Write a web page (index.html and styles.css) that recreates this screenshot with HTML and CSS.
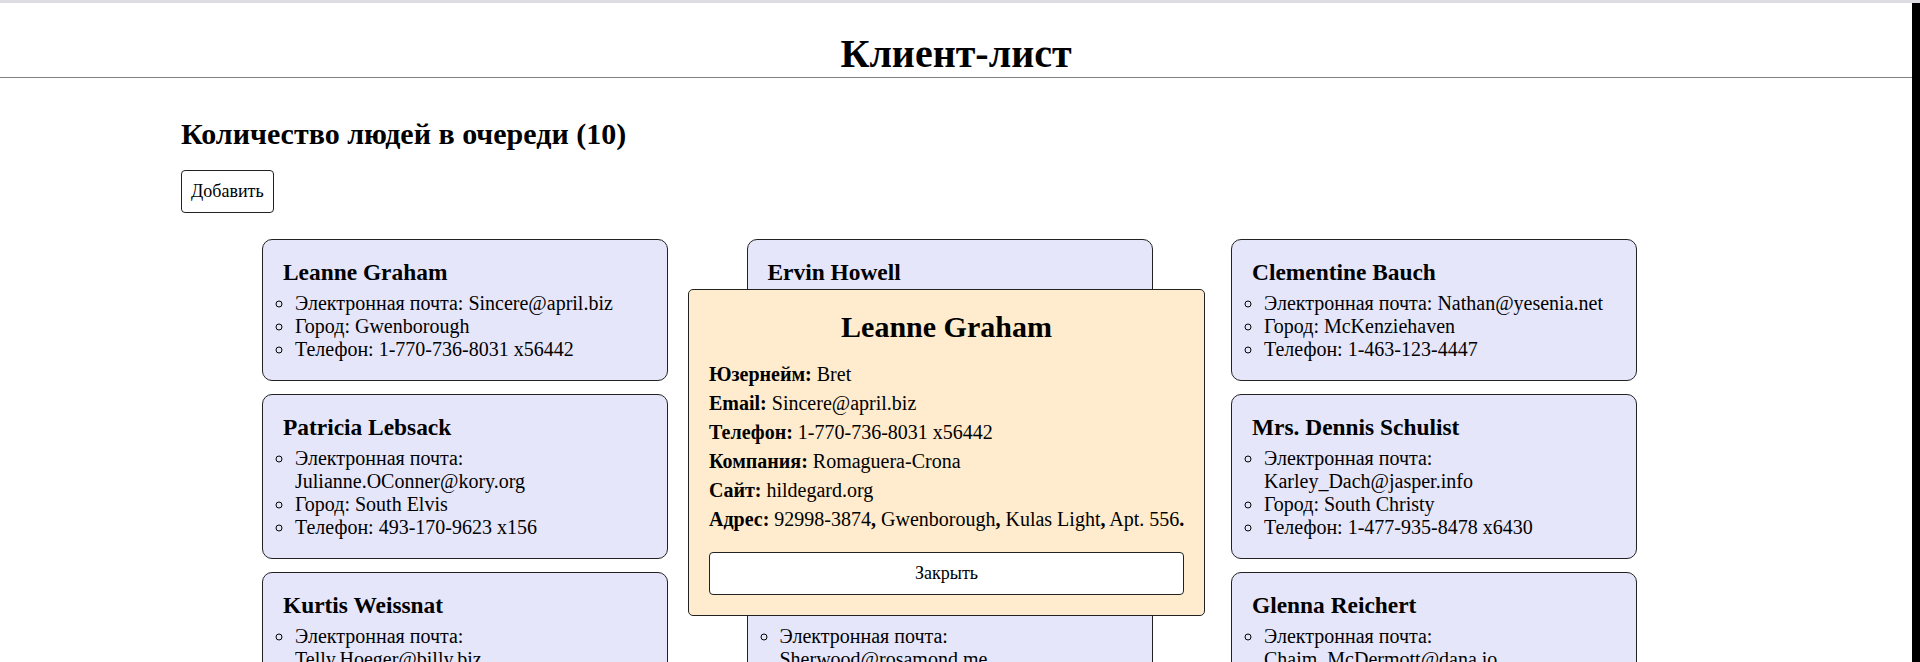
FILE: index.html
```html
<!DOCTYPE html>
<html lang="ru">
<head>
<meta charset="utf-8">
<title>Клиент-лист</title>
<link rel="stylesheet" href="styles.css">
</head>
<body>
<header class="page-header">
  <h1 class="page-title">Клиент-лист</h1>
</header>
<main class="queue">
  <h2 class="queue-title">Количество людей в очереди (10)</h2>
  <button class="btn btn-add" type="button">Добавить</button>
  <div class="client-grid">
    <div class="client-card">
      <h3 class="client-name">Leanne Graham</h3>
      <ul class="client-info">
        <li>Электронная почта: Sincere@april.biz</li>
        <li>Город: Gwenborough</li>
        <li>Телефон: 1-770-736-8031 x56442</li>
      </ul>
    </div>
    <div class="client-card">
      <h3 class="client-name">Ervin Howell</h3>
      <ul class="client-info">
        <li>Электронная почта: Shanna@melissa.tv</li>
        <li>Город: Wisokyburgh</li>
        <li>Телефон: 010-692-6593 x09125</li>
      </ul>
    </div>
    <div class="client-card">
      <h3 class="client-name">Clementine Bauch</h3>
      <ul class="client-info">
        <li>Электронная почта: Nathan@yesenia.net</li>
        <li>Город: McKenziehaven</li>
        <li>Телефон: 1-463-123-4447</li>
      </ul>
    </div>
    <div class="client-card">
      <h3 class="client-name">Patricia Lebsack</h3>
      <ul class="client-info">
        <li>Электронная почта: Julianne.OConner@kory.org</li>
        <li>Город: South Elvis</li>
        <li>Телефон: 493-170-9623 x156</li>
      </ul>
    </div>
    <div class="client-card">
      <h3 class="client-name">Chelsey Dietrich</h3>
      <ul class="client-info">
        <li>Электронная почта: Lucio_Hettinger@annie.ca</li>
        <li>Город: Roscoeview</li>
        <li>Телефон: (254)954-1289</li>
      </ul>
    </div>
    <div class="client-card">
      <h3 class="client-name">Mrs. Dennis Schulist</h3>
      <ul class="client-info">
        <li>Электронная почта: Karley_Dach@jasper.info</li>
        <li>Город: South Christy</li>
        <li>Телефон: 1-477-935-8478 x6430</li>
      </ul>
    </div>
    <div class="client-card">
      <h3 class="client-name">Kurtis Weissnat</h3>
      <ul class="client-info">
        <li>Электронная почта: Telly.Hoeger@billy.biz</li>
        <li>Город: Howemouth</li>
        <li>Телефон: 210.067.6132</li>
      </ul>
    </div>
    <div class="client-card">
      <h3 class="client-name">Nicholas Runolfsdottir V</h3>
      <ul class="client-info">
        <li>Электронная почта: Sherwood@rosamond.me</li>
        <li>Город: Aliyaview</li>
        <li>Телефон: 586.493.6943 x140</li>
      </ul>
    </div>
    <div class="client-card">
      <h3 class="client-name">Glenna Reichert</h3>
      <ul class="client-info">
        <li>Электронная почта: Chaim_McDermott@dana.io</li>
        <li>Город: Bartholomebury</li>
        <li>Телефон: (775)976-6794 x41206</li>
      </ul>
    </div>
    <div class="client-card">
      <h3 class="client-name">Clementina DuBuque</h3>
      <ul class="client-info">
        <li>Электронная почта: Rey.Padberg@karina.biz</li>
        <li>Город: Lebsackbury</li>
        <li>Телефон: 024-648-3804</li>
      </ul>
    </div>

    <div class="client-modal">
      <h2 class="modal-title">Leanne Graham</h2>
      <p class="modal-row"><b>Юзернейм:</b> Bret</p>
      <p class="modal-row"><b>Email:</b> Sincere@april.biz</p>
      <p class="modal-row"><b>Телефон:</b> 1-770-736-8031 x56442</p>
      <p class="modal-row"><b>Компания:</b> Romaguera-Crona</p>
      <p class="modal-row"><b>Сайт:</b> hildegard.org</p>
      <p class="modal-row modal-row-address"><b>Адрес:</b> 92998-3874<b>,</b> Gwenborough<b>,</b> Kulas Light<b>,</b> Apt. 556<b>.</b></p>
      <button class="btn btn-close" type="button">Закрыть</button>
    </div>
  </div>
</main>
</body>
</html>
```

FILE: styles.css
```css
html {
  border-top: 3px solid #dedde3;
  background: #ffffff;
  overflow: hidden;
}

body {
  margin: 0;
  border-right: 8px solid #000000;
  min-height: 659px;
  font-family: "Liberation Serif", "Times New Roman", serif;
  font-size: 20px;
  color: #000000;
}

.page-header {
  border-bottom: 1px solid #808080;
}

.page-title {
  margin: 28px 0 0;
  font-size: 40px;
  line-height: 46px;
  font-weight: bold;
  text-align: center;
}

.queue {
  padding: 39px 181px 20px;
}

.queue-title {
  margin: 0 0 20px;
  font-size: 30px;
  line-height: 33px;
  font-weight: bold;
}

.btn {
  font-family: "Liberation Serif", "Times New Roman", serif;
  font-size: 18px;
  line-height: 21px;
  color: #000000;
  background: #ffffff;
  border: 1px solid #222222;
  border-radius: 4px;
}

.btn-add {
  display: block;
  padding: 10px 9px;
}

.client-grid {
  position: relative;
  margin: 26px 0 0 81px;
  display: grid;
  grid-template-columns: repeat(3, 406px);
  column-gap: 78.5px;
  row-gap: 13.5px;
  align-items: start;
}

.client-card {
  box-sizing: border-box;
  padding: 19px 20px;
  background: #e6e6fa;
  border: 1px solid #222222;
  border-radius: 10px;
}

.client-name {
  margin: 0 0 6.5px;
  font-size: 23.4px;
  line-height: 26px;
  font-weight: bold;
}

.client-info {
  margin: 0;
  padding-left: 12px;
  list-style: circle;
  line-height: 23px;
}

.client-modal {
  position: absolute;
  left: 426px;
  top: 50px;
  box-sizing: border-box;
  width: 517px;
  padding: 20px;
  background: #ffebcd;
  border: 1px solid #222222;
  border-radius: 5px;
}

.modal-title {
  margin: 0 0 20px;
  font-size: 30px;
  line-height: 33px;
  font-weight: bold;
  text-align: center;
}

.modal-row {
  margin: 6px 0;
  line-height: 23px;
}

.modal-row-address {
  white-space: nowrap;
}

.btn-close {
  display: block;
  width: 100%;
  margin-top: 21px;
  padding: 10px 9px;
}
```
